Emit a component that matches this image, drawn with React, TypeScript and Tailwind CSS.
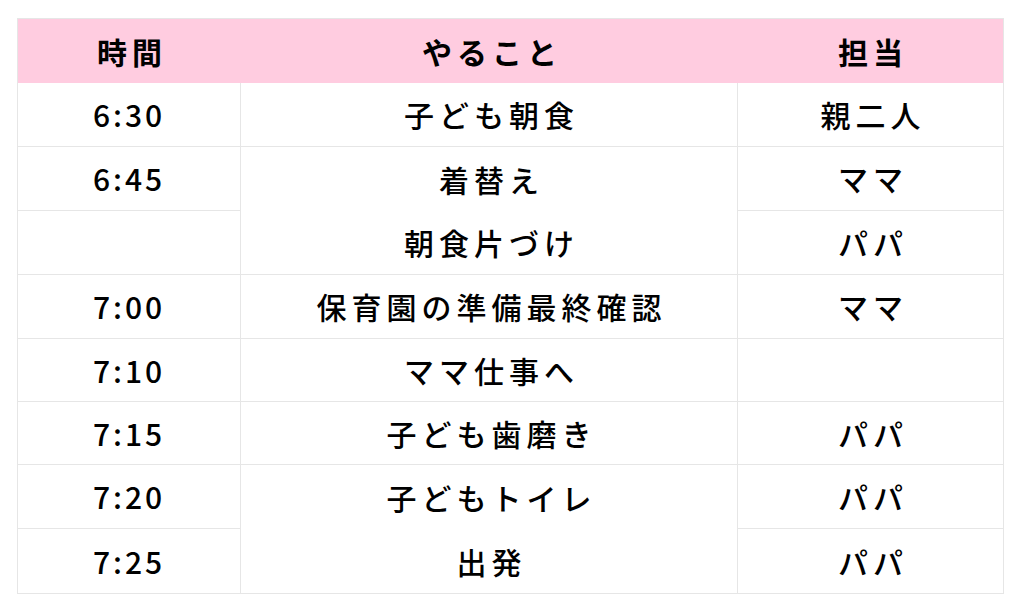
const rows = [
  { time: '6:30', task: '子ども朝食', who: '親二人', h: 'h-[64px]', joinNext: false },
  { time: '6:45', task: '着替え', who: 'ママ', h: 'h-[64px]', joinNext: true },
  { time: '', task: '朝食片づけ', who: 'パパ', h: 'h-[64px]', joinNext: false },
  { time: '7:00', task: '保育園の準備最終確認', who: 'ママ', h: 'h-[64px]', joinNext: false },
  { time: '7:10', task: 'ママ仕事へ', who: '', h: 'h-[63px]', joinNext: false },
  { time: '7:15', task: '子ども歯磨き', who: 'パパ', h: 'h-[63px]', joinNext: false },
  { time: '7:20', task: '子どもトイレ', who: 'パパ', h: 'h-[64px]', joinNext: true },
  { time: '7:25', task: '出発', who: 'パパ', h: 'h-[64px]', joinNext: false },
];

export default function App() {
  return (
    <div
      className="w-[1024px] h-[616px] bg-white pt-[18px] pl-[17px] text-black"
      style={{ fontFamily: '"Noto Sans CJK JP", "Noto Sans", sans-serif' }}
    >
      <div className="w-[987px] border border-[#e6e6e6]">
        {/* Header */}
        <div className="grid grid-cols-[223px_497px_265px] h-[64px] bg-[#ffcce0] text-[30px] font-bold tracking-[5px]">
          <div className="flex items-center justify-center pl-[5px]">時間</div>
          <div className="flex items-center justify-center pl-[5px]">やること</div>
          <div className="flex items-center justify-center pl-[5px]">担当</div>
        </div>

        {/* Body */}
        {rows.map((row, i) => {
          const last = i === rows.length - 1;
          const bottom = last ? '' : 'border-b';
          return (
            <div
              key={i}
              className={`grid grid-cols-[223px_497px_265px] ${row.h} text-[30px] font-medium`}
            >
              <div className={`flex items-center justify-center border-r border-[#e6e6e6] tracking-[3px] ${bottom}`}>
                {row.time}
              </div>
              <div
                className={`flex items-center justify-center pl-[5px] border-r border-[#e6e6e6] tracking-[5px] ${
                  row.joinNext || last ? '' : 'border-b'
                }`}
              >
                {row.task}
              </div>
              <div className={`flex items-center justify-center pl-[5px] border-[#e6e6e6] tracking-[5px] ${bottom}`}>
                {row.who}
              </div>
            </div>
          );
        })}
      </div>
    </div>
  );
}
